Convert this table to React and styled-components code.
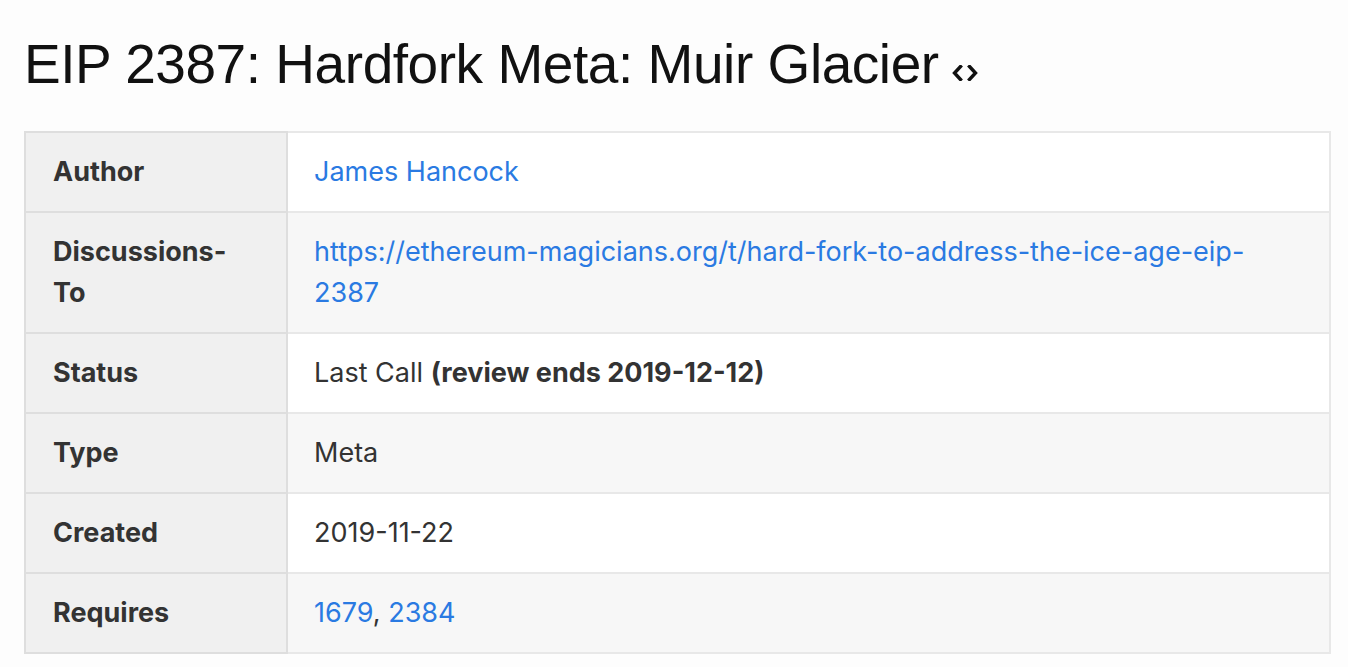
import React from "react";
import styled, { createGlobalStyle } from "styled-components";

const Global = createGlobalStyle`
  html, body { margin: 0; padding: 0; background: #fdfdfd; }
  body { font-family: "Liberation Sans", Arial, sans-serif; color: #111; }
`;

const Page = styled.main`
  padding: 0 17px 0 24px;
`;

const Title = styled.h1`
  margin: 0;
  padding-top: 25px;
  padding-bottom: 30px;
  font-family: "Liberation Sans", Arial, sans-serif;
  font-weight: 400;
  font-size: 55px;
  line-height: 74px;
  letter-spacing: -0.45px;
  color: #111;
`;

const Anchor = styled.a`
  display: inline-block;
  margin-left: 13px;
  color: #111;
  vertical-align: 2px;
`;

const AnchorIcon = () => (
  <svg width="26" height="16" viewBox="0 0 26 16" fill="none">
    <path
      d="M8.5 1.5 L2.5 8 L8.5 14.5 M17.5 1.5 L23.5 8 L17.5 14.5"
      stroke="#111"
      strokeWidth="3.4"
      strokeLinecap="square"
    />
  </svg>
);

const Table = styled.table`
  width: 100%;
  table-layout: fixed;
  border-collapse: collapse;
  border: 2px solid #ececec;
  font-family: Inter, "Noto Sans", sans-serif;
  font-size: 27px;
  line-height: 41px;
  color: #333;
`;

const KeyCol = styled.col`
  width: 262px;
`;

const Row = styled.tr`
  background: ${(p) => (p.$even ? "#f7f7f7" : "#ffffff")};
`;

const Head = styled.th`
  text-align: left;
  vertical-align: middle;
  font-weight: 700;
  background: #f0f0f0;
  border: 2px solid #dedede;
  padding: 18px 40px 19px 27px;
  color: #333;
`;

const Cell = styled.td`
  border: 2px solid #e8e8e8;
  padding: 18px 28px 19px 26px;
  vertical-align: middle;
`;

const Link = styled.a`
  color: #2a7ae2;
  text-decoration: none;
`;

const rows = [
  ["Author", <Link href="#">James Hancock</Link>],
  [
    "Discussions-To",
    <Link href="#">
      https://ethereum-magicians.org/t/hard-fork-to-address-the-ice-age-eip-2387
    </Link>,
  ],
  [
    "Status",
    <>
      Last Call <b>(review ends 2019-12-12)</b>
    </>,
  ],
  ["Type", "Meta"],
  ["Created", "2019-11-22"],
  [
    "Requires",
    <>
      <Link href="#">1679</Link>, <Link href="#">2384</Link>
    </>,
  ],
];

export default function App() {
  return (
    <Page>
      <Global />
      <Title>
        EIP 2387: Hardfork Meta: Muir Glacier
        <Anchor href="#" aria-label="anchor">
          <AnchorIcon />
        </Anchor>
      </Title>
      <Table>
        <colgroup>
          <KeyCol />
          <col />
        </colgroup>
        <tbody>
          {rows.map(([k, v], i) => (
            <Row key={k} $even={i % 2 === 1}>
              <Head>{k}</Head>
              <Cell>{v}</Cell>
            </Row>
          ))}
        </tbody>
      </Table>
    </Page>
  );
}
